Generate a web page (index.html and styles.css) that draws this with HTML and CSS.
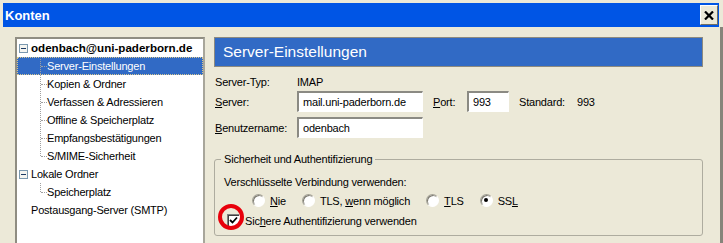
FILE: index.html
```html
<!DOCTYPE html>
<html lang="de">

<head>
    <meta charset="UTF-8" />
    <meta name="viewport" content="width=device-width, initial-scale=1.0" />
    <title>Konten</title>
    <link rel="stylesheet" href="styles.css">
</head>

<body>
    <div class="titlebar">
        <span class="title">Konten</span>
        <span class="close">
            <svg width="10" height="9" viewBox="0 0 10 9">
                <path d="M1 0.5 L9 8.5 M9 0.5 L1 8.5" stroke="#000" stroke-width="2.2" fill="none" />
            </svg>
        </span>
    </div>
    <div class="main">
        <!-- arbol de cuentas -->
        <div class="tree">
            <div class="node root bold"><span class="toggle"></span>odenbach@uni-paderborn.de</div>
            <div class="kids">
                <div class="node child selected">Server-Einstellungen</div>
                <div class="node child">Kopien &amp; Ordner</div>
                <div class="node child">Verfassen &amp; Adressieren</div>
                <div class="node child">Offline &amp; Speicherplatz</div>
                <div class="node child">Empfangsbestätigungen</div>
                <div class="node child">S/MIME-Sicherheit</div>
            </div>
            <div class="node root"><span class="toggle"></span>Lokale Ordner</div>
            <div class="kids">
                <div class="node child">Speicherplatz</div>
            </div>
            <div class="node root">Postausgang-Server (SMTP)</div>
        </div>

        <!-- panel derecho -->
        <div class="panel">
            <div class="header">Server-Einstellungen</div>
            <div class="form">
                <div class="row">
                    <span class="lbl">Server-Typ:</span>
                    <span>IMAP</span>
                </div>
                <div class="row">
                    <label class="lbl"><u>S</u>erver:</label>
                    <input class="field wide" type="text" value="mail.uni-paderborn.de" readonly />
                    <label class="port"><u>P</u>ort:</label>
                    <input class="field short" type="text" value="993" readonly />
                    <span class="std">Standard:</span>
                    <span>993</span>
                </div>
                <div class="row user">
                    <label class="lbl"><u>B</u>enutzername:</label>
                    <input class="field wide" type="text" value="odenbach" readonly />
                </div>
            </div>
            <fieldset class="group">
                <legend>Sicherheit und Authentifizierung</legend>
                <div class="hint">Verschlüsselte Verbindung verwenden:</div>
                <div class="radios">
                    <span class="opt"><span class="radio"></span><span><u>N</u>ie</span></span>
                    <span class="opt"><span class="radio"></span><span>TLS, <u>w</u>enn möglich</span></span>
                    <span class="opt"><span class="radio"></span><span><u>T</u>LS</span></span>
                    <span class="opt"><span class="radio on"></span><span>SS<u>L</u></span></span>
                </div>
                <div class="check-row">
                    <span class="checkbox">
                        <svg width="9" height="9" viewBox="0 0 9 9">
                            <polyline points="1,4 3.5,6.5 8,1.5" stroke="#000" stroke-width="1.8" fill="none" />
                        </svg>
                    </span>
                    <span>Sic<u>h</u>ere Authentifizierung verwenden</span>
                    <span class="mark"></span>
                </div>
            </fieldset>
        </div>
    </div>
</body>

</html>
```

FILE: styles.css
```css
* {
    box-sizing: border-box;
    margin: 0;
    padding: 0;
}

body {
    width: 723px;
    height: 243px;
    overflow: hidden;
    background-color: #ece9d8;
    font-family: "Liberation Sans", Arial, sans-serif;
    font-size: 11px;
    letter-spacing: -0.2px;
    color: #000;
}

u {
    text-decoration: underline;
    text-underline-offset: 1px;
}

/* barra de titulo */
.titlebar {
    margin: 3px 4px 0 3px;
    height: 24px;
    background-color: #0055e5;
    display: flex;
    align-items: center;
    justify-content: space-between;
    padding-left: 2px;
    padding-right: 1px;
}

.title {
    color: #fff;
    font-weight: bold;
    font-size: 13px;
    letter-spacing: 0;
}

.close {
    width: 18px;
    height: 20px;
    background-color: #ece9d8;
    border: 1px solid;
    border-color: #fff #716f64 #716f64 #fff;
    display: flex;
    align-items: center;
    justify-content: center;
}

/* contenido */
.main {
    display: flex;
    gap: 9px;
    padding: 10px 0 0 15px;
    height: 216px;
    border-right: 3px solid #86847a;
}

/* arbol */
.tree {
    width: 190px;
    height: 206px;
    background-color: #fff;
    border: 2px solid;
    border-bottom: 0;
    border-color: #8f8d82 #a8a69b #a8a69b #8f8d82;
    flex-shrink: 0;
}

.node {
    position: relative;
    height: 18px;
    line-height: 18px;
    padding-left: 14px;
    white-space: nowrap;
}

.bold {
    font-weight: bold;
    font-size: 11.6px;
    letter-spacing: 0;
}

.toggle {
    position: absolute;
    left: 2px;
    top: 5px;
    width: 9px;
    height: 9px;
    border: 1px solid #7a98af;
    background-color: #f4f4f0;
}

.toggle::after {
    content: "";
    position: absolute;
    left: 1px;
    top: 3px;
    width: 5px;
    height: 1px;
    background-color: #1b3a64;
}

.kids {
    position: relative;
}

.kids::before {
    content: "";
    position: absolute;
    z-index: 1;
    left: 23px;
    top: 0;
    height: calc(100% - 9px);
    border-left: 1px dotted #a0a0a0;
}

.child {
    padding-left: 30px;
}

.child::before {
    content: "";
    position: absolute;
    left: 24px;
    top: 9px;
    width: 6px;
    border-top: 1px dotted #a0a0a0;
}

.selected {
    background-color: #316ac5;
    color: #fff;
    outline: 1px dotted #d8c890;
    outline-offset: -1px;
}

/* panel derecho */
.panel {
    width: 489px;
    flex-shrink: 0;
}

.header {
    height: 30px;
    line-height: 28px;
    border: 1px solid #8c8a80;
    background-color: #316ac5;
    color: #fff;
    font-size: 15.5px;
    letter-spacing: 0;
    padding-left: 8px;
}

.form {
    padding-top: 6px;
}

.row {
    display: flex;
    align-items: center;
    height: 18px;
}

.row+.row {
    height: 21px;
}

.row.user {
    margin-top: 5px;
}

.lbl {
    width: 83px;
    padding-left: 1px;
}

.field {
    height: 21px;
    font-family: inherit;
    font-size: 11px;
    letter-spacing: -0.2px;
    color: #000;
    background-color: #fff;
    border-style: solid;
    border-width: 2px 1px 1px 2px;
    border-color: #8b8a83 #fff #fff #8b8a83;
    padding: 0 3px 0 4px;
    outline: none;
}

.wide {
    width: 126px;
}

.short {
    width: 42px;
}

.port {
    width: 34px;
    margin-left: 10px;
}

.std {
    width: 58px;
    margin-left: 10px;
}

/* grupo de seguridad */
.group {
    margin-top: 15px;
    border: 1px solid #aeac9f;
    border-radius: 3px;
    padding: 0 8px 8px 6px;
    height: 83px;
}

.group legend {
    padding: 0 3px;
    line-height: 13px;
}

.hint {
    margin: 10px 0 0 3px;
    line-height: 13px;
}

.radios {
    display: flex;
    align-items: center;
    padding-left: 31px;
    margin-top: 5px;
    height: 13px;
}

.opt {
    display: flex;
    align-items: center;
    margin-right: 16px;
}

.radio {
    position: relative;
    width: 13px;
    height: 13px;
    margin-right: 5px;
    border-radius: 50%;
    background-color: #fff;
    border: 1px solid;
    border-color: #a3a195 #fff #fff #a3a195;
    box-shadow: inset 1px 1px 0 #7c7a70;
}

.radio.on::after {
    content: "";
    position: absolute;
    left: 3px;
    top: 3px;
    width: 4px;
    height: 4px;
    border-radius: 50%;
    background-color: #000;
}

.check-row {
    position: relative;
    display: flex;
    align-items: center;
    margin: 7px 0 0 6px;
    height: 13px;
}

.checkbox {
    width: 13px;
    height: 13px;
    margin-right: 5px;
    background-color: #fff;
    border: 1px solid;
    border-color: #808080 #fff #fff #808080;
    box-shadow: inset 1px 1px 0 #404040;
    display: flex;
    align-items: center;
    justify-content: center;
}

/* circulo rojo de marca */
.mark {
    position: absolute;
    left: -9px;
    top: -10px;
    width: 26px;
    height: 26px;
    border: 4px solid #e8000b;
    border-radius: 50%;
}
```
